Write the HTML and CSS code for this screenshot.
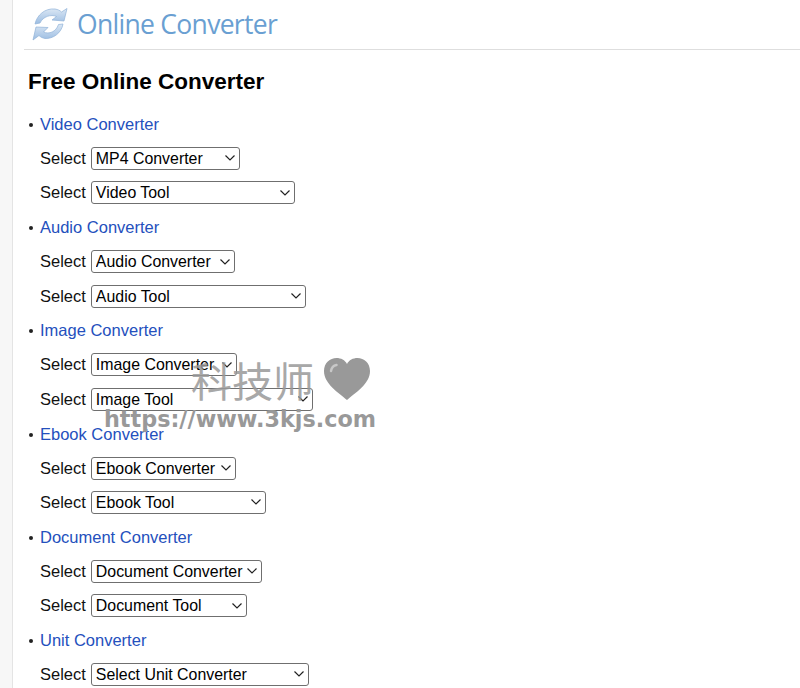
FILE: index.html
```html
<!DOCTYPE html>
<html lang="en">
<head>
<meta charset="utf-8">
<title>Free Online Converter</title>
<link rel="stylesheet" href="styles.css">
</head>
<body>
<div class="page">
  <header class="site-header">
    <a class="logo" href="#">
      <svg class="logo-icon" width="36" height="34" viewBox="0 0 36 34" aria-hidden="true">
        <defs>
          <linearGradient id="arrowFill" x1="0" y1="0" x2="0" y2="1">
            <stop offset="0" stop-color="#dbe7f4"/>
            <stop offset="1" stop-color="#9cbde2"/>
          </linearGradient>
        </defs>
        <path d="M3 17 C5 8 13 1 23 2 C26 2.500 28 3.500 29.500 5 L35 1.500 L32 14 L20 13 L24.500 9.500 C19 7 11 9.500 8 16 Z" fill="url(#arrowFill)" stroke="#8fb2d8" stroke-width=".7"/>
        <path d="M31 17 C29.500 26 21 32 13 31.500 C10.500 31 8.500 30 7 28.500 L1 33 L4 20 L16 20.500 L11.500 25 C17 27.500 24 25 26.500 17.500 Z" fill="url(#arrowFill)" stroke="#8fb2d8" stroke-width=".7"/>
      </svg>
      <span class="logo-text">Online Converter</span>
    </a>
  </header>
  <h1 class="title">Free Online Converter</h1>
  <ul class="groups">
    <li class="group">
      <a class="group-link" href="#">Video Converter</a>
      <label class="row">Select <select class="pick w149"><option>MP4 Converter</option></select></label>
      <label class="row">Select <select class="pick w204"><option>Video Tool</option></select></label>
    </li>
    <li class="group">
      <a class="group-link" href="#">Audio Converter</a>
      <label class="row">Select <select class="pick w144"><option>Audio Converter</option></select></label>
      <label class="row">Select <select class="pick w215"><option>Audio Tool</option></select></label>
    </li>
    <li class="group">
      <a class="group-link" href="#">Image Converter</a>
      <label class="row">Select <select class="pick w146"><option>Image Converter</option></select></label>
      <label class="row">Select <select class="pick w222"><option>Image Tool</option></select></label>
    </li>
    <li class="group">
      <a class="group-link" href="#">Ebook Converter</a>
      <label class="row">Select <select class="pick w145"><option>Ebook Converter</option></select></label>
      <label class="row">Select <select class="pick w175"><option>Ebook Tool</option></select></label>
    </li>
    <li class="group">
      <a class="group-link" href="#">Document Converter</a>
      <label class="row">Select <select class="pick w171"><option>Document Converter</option></select></label>
      <label class="row">Select <select class="pick w156"><option>Document Tool</option></select></label>
    </li>
    <li class="group">
      <a class="group-link" href="#">Unit Converter</a>
      <label class="row">Select <select class="pick w218"><option>Select Unit Converter</option></select></label>
    </li>
  </ul>
</div>
<div class="watermark">
  <div class="wm-top">
    <span class="wm-cjk">科技师</span>
    <svg class="wm-heart" width="48" height="44" viewBox="0 0 48 44" aria-hidden="true"><path d="M24 43 C16 36 1 27 1 14 C1 6 7 1 13.500 1 C18 1 22 3 24 7 C26 3 30 1 34.500 1 C41 1 47 6 47 14 C47 27 32 36 24 43 Z" fill="#999"/><path d="M8 14 C8.500 11 10.500 8.500 13.500 8" fill="none" stroke="#c8c8c8" stroke-width="2.500" stroke-linecap="round"/></svg>
  </div>
  <div class="wm-url">https://www.3kjs.com</div>
</div>
</body>
</html>
```
FILE: styles.css
```css
* { box-sizing: border-box; }
html, body { margin: 0; height: 100%; }
body {
  background: #f7f7f7;
  font-family: "Liberation Sans", Arial, sans-serif;
  font-size: 16.500px;
  color: #000;
  overflow: hidden;
  position: relative;
}
.page {
  margin-left: 12px;
  height: 688px;
  overflow: hidden;
  background: #fff;
  border-left: 1px solid #e4e4e4;
  padding-left: 11px;
}
.site-header {
  height: 50px;
  border-bottom: 1px solid #dedede;
}
.logo {
  display: flex;
  align-items: center;
  gap: 9px;
  height: 47px;
  padding-left: 8px;
  text-decoration: none;
}
.logo-icon { flex: none; }
.logo-text {
  font-family: "Open Sans", sans-serif;
  font-size: 26.500px;
  color: #6a9fd2;
  letter-spacing: -.7px;
}
.title {
  margin: 17px 0 0 4px;
  font-size: 22.500px;
  line-height: 30px;
  font-weight: bold;
}
.groups {
  list-style: none;
  margin: 17.100px 0 0;
  padding: 0 0 0 16px;
}
.group { height: 103.200px; line-height: 21px; position: relative; }
.group::before {
  content: "";
  position: absolute;
  left: -11px;
  top: 9px;
  width: 4px;
  height: 4px;
  border-radius: 50%;
  background: #222;
}
.group-link { color: #2450bd; text-decoration: none; display: block; margin-bottom: 1.100px; }
.row {
  display: flex;
  align-items: center;
  gap: 5px;
  height: 22px;
  margin-top: 12.400px;
  color: #111;
}
.pick {
  appearance: none;
  -webkit-appearance: none;
  height: 23px;
  padding: 0 16px 0 4px;
  font-family: inherit;
  font-size: 15.900px;
  color: #000;
  border: 1px solid #6f6f6f;
  border-radius: 3px;
  background-color: #fff;
  background-image: url("data:image/svg+xml,%3Csvg xmlns='http://www.w3.org/2000/svg' width='12' height='8'%3E%3Cpath d='M1.500 1.500 6 6 10.500 1.500' fill='none' stroke='%23222' stroke-width='1.200'/%3E%3C/svg%3E");
  background-repeat: no-repeat;
  background-position: right 3px center;
}
.w144 { width: 144px; }
.w145 { width: 145px; }
.w146 { width: 146px; }
.w149 { width: 149px; }
.w156 { width: 156px; }
.w171 { width: 171px; }
.w175 { width: 175px; }
.w204 { width: 204px; }
.w215 { width: 215px; }
.w218 { width: 218px; }
.w222 { width: 222px; }
.watermark {
  position: absolute;
  left: 104px;
  top: 352px;
  width: 280px;
  color: #999;
  pointer-events: none;
}
.wm-top {
  display: flex;
  align-items: center;
  gap: 10px;
  padding-left: 87px;
  height: 54px;
}
.wm-cjk {
  font-family: "Noto Sans CJK SC", sans-serif;
  font-weight: 400;
  font-size: 41px;
  line-height: 54px;
  white-space: nowrap;
  opacity: .85;
}
.wm-heart { flex: none; margin-left: -1px; }
.wm-url {
  font-family: "DejaVu Sans", sans-serif;
  font-weight: bold;
  font-size: 22.300px;
  line-height: 26px;
  white-space: nowrap;
}
```
